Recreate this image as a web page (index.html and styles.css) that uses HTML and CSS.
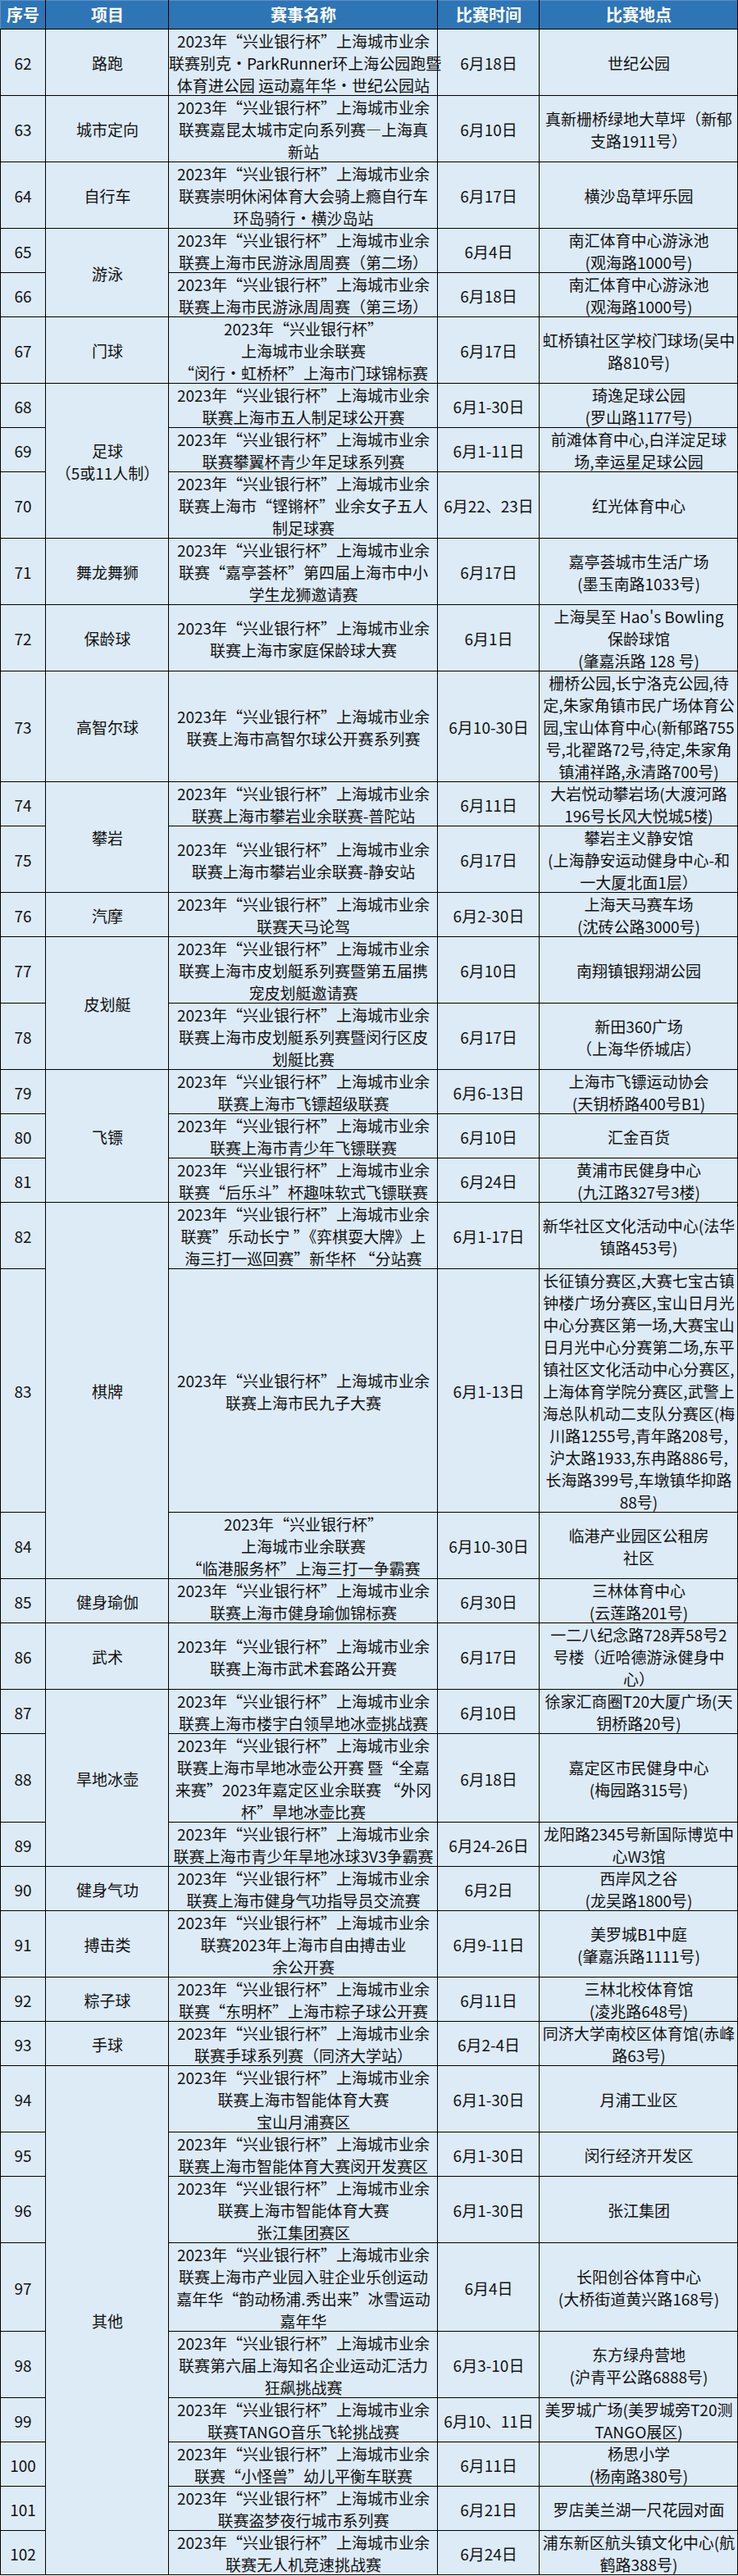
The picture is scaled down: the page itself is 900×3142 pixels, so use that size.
FILE: index.html
```html
<!DOCTYPE html>
<html lang="zh-CN">
<head>
<meta charset="utf-8">
<title>赛事安排</title>
<link rel="stylesheet" href="styles.css">
</head>
<body>
<table class="schedule">
<colgroup>
<col class="c-seq"><col class="c-item"><col class="c-name"><col class="c-date"><col class="c-place">
</colgroup>
<thead>
<tr><th class="seq">序号</th><th>项目</th><th>赛事名称</th><th>比赛时间</th><th>比赛地点</th></tr>
</thead>
<tbody>
<tr><td class="seq">62</td><td>路跑</td><td>2023年“兴业银行杯”上海城市业余<br>联赛别克·ParkRunner环上海公园跑暨<br>体育进公园 运动嘉年华·世纪公园站</td><td>6月18日</td><td>世纪公园</td></tr>
<tr><td class="seq">63</td><td>城市定向</td><td>2023年“兴业银行杯”上海城市业余<br>联赛嘉昆太城市定向系列赛—上海真<br>新站</td><td>6月10日</td><td>真新栅桥绿地大草坪（新郁<br>支路1911号）</td></tr>
<tr><td class="seq">64</td><td>自行车</td><td>2023年“兴业银行杯”上海城市业余<br>联赛崇明休闲体育大会骑上瘾自行车<br>环岛骑行·横沙岛站</td><td>6月17日</td><td>横沙岛草坪乐园</td></tr>
<tr><td class="seq">65</td><td rowspan="2">游泳</td><td>2023年“兴业银行杯”上海城市业余<br>联赛上海市民游泳周周赛（第二场）</td><td>6月4日</td><td>南汇体育中心游泳池<br>(观海路1000号)</td></tr>
<tr><td class="seq">66</td><td>2023年“兴业银行杯”上海城市业余<br>联赛上海市民游泳周周赛（第三场）</td><td>6月18日</td><td>南汇体育中心游泳池<br>(观海路1000号)</td></tr>
<tr><td class="seq">67</td><td>门球</td><td>2023年“兴业银行杯”<br>上海城市业余联赛<br>“闵行·虹桥杯”上海市门球锦标赛</td><td>6月17日</td><td>虹桥镇社区学校门球场(吴中<br>路810号)</td></tr>
<tr><td class="seq">68</td><td rowspan="3">足球<br>（5或11人制）</td><td>2023年“兴业银行杯”上海城市业余<br>联赛上海市五人制足球公开赛</td><td>6月1-30日</td><td>琦逸足球公园<br>(罗山路1177号)</td></tr>
<tr><td class="seq">69</td><td>2023年“兴业银行杯”上海城市业余<br>联赛攀翼杯青少年足球系列赛</td><td>6月1-11日</td><td>前滩体育中心,白洋淀足球<br>场,幸运星足球公园</td></tr>
<tr><td class="seq">70</td><td>2023年“兴业银行杯”上海城市业余<br>联赛上海市“铿锵杯”业余女子五人<br>制足球赛</td><td>6月22、23日</td><td>红光体育中心</td></tr>
<tr><td class="seq">71</td><td>舞龙舞狮</td><td>2023年“兴业银行杯”上海城市业余<br>联赛“嘉亭荟杯”第四届上海市中小<br>学生龙狮邀请赛</td><td>6月17日</td><td>嘉亭荟城市生活广场<br>(墨玉南路1033号)</td></tr>
<tr><td class="seq">72</td><td>保龄球</td><td>2023年“兴业银行杯”上海城市业余<br>联赛上海市家庭保龄球大赛</td><td>6月1日</td><td>上海昊至 Hao's Bowling<br>保龄球馆<br>(肇嘉浜路 128 号)</td></tr>
<tr><td class="seq">73</td><td>高智尔球</td><td>2023年“兴业银行杯”上海城市业余<br>联赛上海市高智尔球公开赛系列赛</td><td>6月10-30日</td><td>栅桥公园,长宁洛克公园,待<br>定,朱家角镇市民广场体育公<br>园,宝山体育中心(新郁路755<br>号,北翟路72号,待定,朱家角<br>镇浦祥路,永清路700号)</td></tr>
<tr><td class="seq">74</td><td rowspan="2">攀岩</td><td>2023年“兴业银行杯”上海城市业余<br>联赛上海市攀岩业余联赛-普陀站</td><td>6月11日</td><td>大岩悦动攀岩场(大渡河路<br>196号长风大悦城5楼)</td></tr>
<tr><td class="seq">75</td><td>2023年“兴业银行杯”上海城市业余<br>联赛上海市攀岩业余联赛-静安站</td><td>6月17日</td><td>攀岩主义静安馆<br>(上海静安运动健身中心-和<br>一大厦北面1层）</td></tr>
<tr><td class="seq">76</td><td>汽摩</td><td>2023年“兴业银行杯”上海城市业余<br>联赛天马论驾</td><td>6月2-30日</td><td>上海天马赛车场<br>(沈砖公路3000号)</td></tr>
<tr><td class="seq">77</td><td rowspan="2">皮划艇</td><td>2023年“兴业银行杯”上海城市业余<br>联赛上海市皮划艇系列赛暨第五届携<br>宠皮划艇邀请赛</td><td>6月10日</td><td>南翔镇银翔湖公园</td></tr>
<tr><td class="seq">78</td><td>2023年“兴业银行杯”上海城市业余<br>联赛上海市皮划艇系列赛暨闵行区皮<br>划艇比赛</td><td>6月17日</td><td>新田360广场<br>（上海华侨城店）</td></tr>
<tr><td class="seq">79</td><td rowspan="3">飞镖</td><td>2023年“兴业银行杯”上海城市业余<br>联赛上海市飞镖超级联赛</td><td>6月6-13日</td><td>上海市飞镖运动协会<br>(天钥桥路400号B1)</td></tr>
<tr><td class="seq">80</td><td>2023年“兴业银行杯”上海城市业余<br>联赛上海市青少年飞镖联赛</td><td>6月10日</td><td>汇金百货</td></tr>
<tr><td class="seq">81</td><td>2023年“兴业银行杯”上海城市业余<br>联赛“后乐斗”杯趣味软式飞镖联赛</td><td>6月24日</td><td>黄浦市民健身中心<br>(九江路327号3楼)</td></tr>
<tr><td class="seq">82</td><td rowspan="3">棋牌</td><td>2023年“兴业银行杯”上海城市业余<br>联赛”乐动长宁 ”《弈棋耍大牌》上<br>海三打一巡回赛”新华杯 “分站赛</td><td>6月1-17日</td><td>新华社区文化活动中心(法华<br>镇路453号)</td></tr>
<tr><td class="seq">83</td><td>2023年“兴业银行杯”上海城市业余<br>联赛上海市民九子大赛</td><td>6月1-13日</td><td>长征镇分赛区,大赛七宝古镇<br>钟楼广场分赛区,宝山日月光<br>中心分赛区第一场,大赛宝山<br>日月光中心分赛第二场,东平<br>镇社区文化活动中心分赛区,<br>上海体育学院分赛区,武警上<br>海总队机动二支队分赛区(梅<br>川路1255号,青年路208号,<br>沪太路1933,东冉路886号,<br>长海路399号,车墩镇华抑路<br>88号)</td></tr>
<tr><td class="seq">84</td><td>2023年“兴业银行杯”<br>上海城市业余联赛<br>“临港服务杯”上海三打一争霸赛</td><td>6月10-30日</td><td>临港产业园区公租房<br>社区</td></tr>
<tr><td class="seq">85</td><td>健身瑜伽</td><td>2023年“兴业银行杯”上海城市业余<br>联赛上海市健身瑜伽锦标赛</td><td>6月30日</td><td>三林体育中心<br>(云莲路201号)</td></tr>
<tr><td class="seq">86</td><td>武术</td><td>2023年“兴业银行杯”上海城市业余<br>联赛上海市武术套路公开赛</td><td>6月17日</td><td>一二八纪念路728弄58号2<br>号楼（近哈德游泳健身中<br>心）</td></tr>
<tr><td class="seq">87</td><td rowspan="3">旱地冰壶</td><td>2023年“兴业银行杯”上海城市业余<br>联赛上海市楼宇白领旱地冰壶挑战赛</td><td>6月10日</td><td>徐家汇商圈T20大厦广场(天<br>钥桥路20号)</td></tr>
<tr><td class="seq">88</td><td>2023年“兴业银行杯”上海城市业余<br>联赛上海市旱地冰壶公开赛 暨“全嘉<br>来赛”2023年嘉定区业余联赛 “外冈<br>杯”旱地冰壶比赛</td><td>6月18日</td><td>嘉定区市民健身中心<br>(梅园路315号)</td></tr>
<tr><td class="seq">89</td><td>2023年“兴业银行杯”上海城市业余<br>联赛上海市青少年旱地冰球3V3争霸赛</td><td>6月24-26日</td><td>龙阳路2345号新国际博览中<br>心W3馆</td></tr>
<tr><td class="seq">90</td><td>健身气功</td><td>2023年“兴业银行杯”上海城市业余<br>联赛上海市健身气功指导员交流赛</td><td>6月2日</td><td>西岸风之谷<br>(龙吴路1800号)</td></tr>
<tr><td class="seq">91</td><td>搏击类</td><td>2023年“兴业银行杯”上海城市业余<br>联赛2023年上海市自由搏击业<br>余公开赛</td><td>6月9-11日</td><td>美罗城B1中庭<br>(肇嘉浜路1111号)</td></tr>
<tr><td class="seq">92</td><td>粽子球</td><td>2023年“兴业银行杯”上海城市业余<br>联赛“东明杯”上海市粽子球公开赛</td><td>6月11日</td><td>三林北校体育馆<br>(凌兆路648号)</td></tr>
<tr><td class="seq">93</td><td>手球</td><td>2023年“兴业银行杯”上海城市业余<br>联赛手球系列赛（同济大学站）</td><td>6月2-4日</td><td>同济大学南校区体育馆(赤峰<br>路63号)</td></tr>
<tr><td class="seq">94</td><td rowspan="9">其他</td><td>2023年“兴业银行杯”上海城市业余<br>联赛上海市智能体育大赛<br>宝山月浦赛区</td><td>6月1-30日</td><td>月浦工业区</td></tr>
<tr><td class="seq">95</td><td>2023年“兴业银行杯”上海城市业余<br>联赛上海市智能体育大赛闵开发赛区</td><td>6月1-30日</td><td>闵行经济开发区</td></tr>
<tr><td class="seq">96</td><td>2023年“兴业银行杯”上海城市业余<br>联赛上海市智能体育大赛<br>张江集团赛区</td><td>6月1-30日</td><td>张江集团</td></tr>
<tr><td class="seq">97</td><td>2023年“兴业银行杯”上海城市业余<br>联赛上海市产业园入驻企业乐创运动<br>嘉年华“韵动杨浦.秀出来”冰雪运动<br>嘉年华</td><td>6月4日</td><td>长阳创谷体育中心<br>(大桥街道黄兴路168号)</td></tr>
<tr><td class="seq">98</td><td>2023年“兴业银行杯”上海城市业余<br>联赛第六届上海知名企业运动汇活力<br>狂飙挑战赛</td><td>6月3-10日</td><td>东方绿舟营地<br>(沪青平公路6888号)</td></tr>
<tr><td class="seq">99</td><td>2023年“兴业银行杯”上海城市业余<br>联赛TANGO音乐飞轮挑战赛</td><td>6月10、11日</td><td>美罗城广场(美罗城旁T20测<br>TANGO展区)</td></tr>
<tr><td class="seq">100</td><td>2023年“兴业银行杯”上海城市业余<br>联赛“小怪兽”幼儿平衡车联赛</td><td>6月11日</td><td>杨思小学<br>(杨南路380号)</td></tr>
<tr><td class="seq">101</td><td>2023年“兴业银行杯”上海城市业余<br>联赛盗梦夜行城市系列赛</td><td>6月21日</td><td>罗店美兰湖一尺花园对面</td></tr>
<tr><td class="seq">102</td><td>2023年“兴业银行杯”上海城市业余<br>联赛无人机竞速挑战赛</td><td>6月24日</td><td>浦东新区航头镇文化中心(航<br>鹤路388号)</td></tr>
</tbody>
</table>
</body>
</html>
```

FILE: styles.css
```css
html, body {
  margin: 0;
  padding: 0;
  background: #ffffff;
}

.schedule {
  width: 900px;
  table-layout: fixed;
  border-collapse: separate;
  border-spacing: 0;
  font-family: "Noto Sans CJK SC", "Noto Sans", sans-serif;
  font-size: 19px;
  line-height: 27px;
  color: #111111;
}

.c-seq { width: 56px; }
.c-item { width: 150px; }
.c-name { width: 328px; }
.c-date { width: 124px; }
.c-place { width: 242px; }

.schedule th,
.schedule td {
  padding: 0;
  text-align: center;
  vertical-align: middle;
  white-space: nowrap;
  background: #ddebf7;
  box-shadow: inset -1px -1px 0 #000000;
}

.schedule th {
  height: 36px;
  line-height: 36px;
  font-size: 20px;
  font-weight: 700;
  color: #ffffff;
  background: #2e75b6;
  box-shadow: inset -1px -1px 0 #000000, inset 0 1px 0 #5b8fc4;
}

.schedule th.seq {
  box-shadow: inset -1px -1px 0 #000000, inset 1px 1px 0 #5b8fc4;
}

.schedule td.seq {
  box-shadow: inset -1px -1px 0 #000000, inset 1px 0 0 #000000;
}
```
